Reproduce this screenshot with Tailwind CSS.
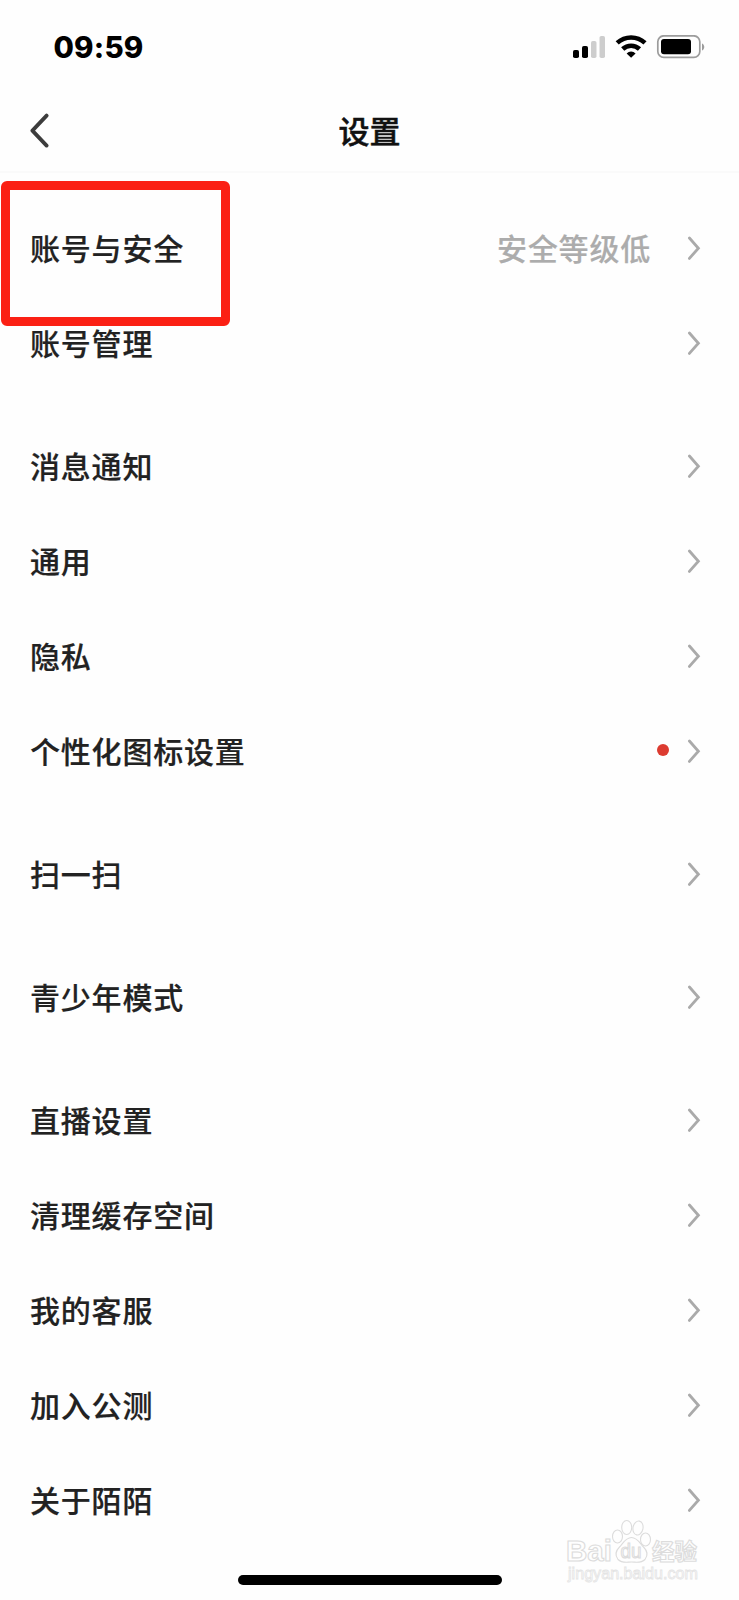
<!DOCTYPE html>
<html lang="zh-CN">
  <head>
    <meta charset="UTF-8" />
    <meta name="viewport" content="width=device-width, initial-scale=1.0" />
    <title>设置</title>
    <script src="https://cdn.jsdelivr.net/npm/@tailwindcss/browser@4"></script>
  </head>
  <body class="relative flex flex-col w-[739px] h-[1600px] overflow-hidden bg-[#fefefe] text-[#222222] font-['Noto_Sans_CJK_SC',sans-serif]">
    <!-- Status bar -->
    <div class="flex items-center justify-between h-[94px] pl-[53.5px] pr-[34px] text-black">
      <span class="pt-0.5 font-['Inter',sans-serif] font-extrabold text-[29.5px] leading-none tracking-[0.2px]">09:59</span>
      <svg class="w-[133px] h-6" viewBox="572 35 133 24" fill="none">
        <rect x="573" y="50" width="6" height="8" rx="1.8" fill="#000" />
        <rect x="582" y="46" width="6" height="12" rx="1.8" fill="#000" />
        <rect x="591" y="41" width="5.5" height="17" rx="1.8" fill="#cdcdcd" />
        <rect x="599.5" y="36" width="5.5" height="22" rx="1.8" fill="#cdcdcd" />
        <g stroke="#000" stroke-width="4.6">
          <path d="M617.2 42.9a20.5 20.5 0 0 1 27.8 0" />
          <path d="M622.7 49a12.3 12.3 0 0 1 16.8 0" />
        </g>
        <path d="M631.1 57.8l-4.5-4.4a6.4 6.4 0 0 1 9 0z" fill="#000" />
        <rect x="657.8" y="35.8" width="42" height="21.6" rx="6" stroke="#9c9c9c" stroke-width="1.7" />
        <rect x="661" y="39" width="30" height="15.3" rx="3" fill="#000" />
        <path d="M702 43.4c3 1.2 3 5.8 0 7z" fill="#9c9c9c" />
      </svg>
    </div>

    <!-- Header -->
    <header class="relative flex items-center justify-center h-[79px] pb-[7px] border-b-2 border-[#fafafa]">
      <svg class="absolute left-[28px] top-[18px] w-6 h-9" viewBox="0 0 24 36" fill="none" stroke="#3c3c3c" stroke-width="3.8" stroke-linecap="round" stroke-linejoin="round">
        <path d="M18.6 3.6L4.4 18.6l14.2 15" />
      </svg>
      <h1 class="text-[31px] leading-none font-medium text-[#111111] [-webkit-text-stroke:0.5px_#111111]">设置</h1>
    </header>

    <!-- Settings list -->
    <main class="flex flex-col gap-[28.4px] pt-[28px] pl-[30px] pr-[38px] text-[30px] leading-none font-medium tracking-[0.8px] [-webkit-text-stroke:0.2px]">
      <section>
        <div class="flex items-center justify-between h-[94.8px]">
          <span class="pb-0.5">账号与安全</span>
          <div class="flex items-center gap-9">
            <span class="pb-0.5 text-[#acacac]">安全等级低</span>
            <svg class="w-[14px] h-6" viewBox="0 0 14 24" fill="none" stroke="#aaaaaa" stroke-width="2.8" stroke-linecap="round"><path d="M2.4 2L11.4 12.2 2.4 22.4" /></svg>
          </div>
        </div>
        <div class="flex items-center justify-between h-[94.8px]">
          <span class="pb-0.5">账号管理</span>
          <svg class="w-[14px] h-6" viewBox="0 0 14 24" fill="none" stroke="#aaaaaa" stroke-width="2.8" stroke-linecap="round"><path d="M2.4 2L11.4 12.2 2.4 22.4" /></svg>
        </div>
      </section>

      <section>
        <div class="flex items-center justify-between h-[94.8px]">
          <span class="pb-0.5">消息通知</span>
          <svg class="w-[14px] h-6" viewBox="0 0 14 24" fill="none" stroke="#aaaaaa" stroke-width="2.8" stroke-linecap="round"><path d="M2.4 2L11.4 12.2 2.4 22.4" /></svg>
        </div>
        <div class="flex items-center justify-between h-[94.8px]">
          <span class="pb-0.5">通用</span>
          <svg class="w-[14px] h-6" viewBox="0 0 14 24" fill="none" stroke="#aaaaaa" stroke-width="2.8" stroke-linecap="round"><path d="M2.4 2L11.4 12.2 2.4 22.4" /></svg>
        </div>
        <div class="flex items-center justify-between h-[94.8px]">
          <span class="pb-0.5">隐私</span>
          <svg class="w-[14px] h-6" viewBox="0 0 14 24" fill="none" stroke="#aaaaaa" stroke-width="2.8" stroke-linecap="round"><path d="M2.4 2L11.4 12.2 2.4 22.4" /></svg>
        </div>
        <div class="flex items-center justify-between h-[94.8px]">
          <span class="pb-0.5">个性化图标设置</span>
          <div class="flex items-center gap-[18px]">
            <span class="w-3 h-3 mb-0.5 rounded-full bg-[#dc3b30]"></span>
            <svg class="w-[14px] h-6" viewBox="0 0 14 24" fill="none" stroke="#aaaaaa" stroke-width="2.8" stroke-linecap="round"><path d="M2.4 2L11.4 12.2 2.4 22.4" /></svg>
          </div>
        </div>
      </section>

      <section>
        <div class="flex items-center justify-between h-[94.8px]">
          <span class="pb-0.5">扫一扫</span>
          <svg class="w-[14px] h-6" viewBox="0 0 14 24" fill="none" stroke="#aaaaaa" stroke-width="2.8" stroke-linecap="round"><path d="M2.4 2L11.4 12.2 2.4 22.4" /></svg>
        </div>
      </section>

      <section>
        <div class="flex items-center justify-between h-[94.8px]">
          <span class="pb-0.5">青少年模式</span>
          <svg class="w-[14px] h-6" viewBox="0 0 14 24" fill="none" stroke="#aaaaaa" stroke-width="2.8" stroke-linecap="round"><path d="M2.4 2L11.4 12.2 2.4 22.4" /></svg>
        </div>
      </section>

      <section>
        <div class="flex items-center justify-between h-[94.8px]">
          <span class="pb-0.5">直播设置</span>
          <svg class="w-[14px] h-6" viewBox="0 0 14 24" fill="none" stroke="#aaaaaa" stroke-width="2.8" stroke-linecap="round"><path d="M2.4 2L11.4 12.2 2.4 22.4" /></svg>
        </div>
        <div class="flex items-center justify-between h-[94.8px]">
          <span class="pb-0.5">清理缓存空间</span>
          <svg class="w-[14px] h-6" viewBox="0 0 14 24" fill="none" stroke="#aaaaaa" stroke-width="2.8" stroke-linecap="round"><path d="M2.4 2L11.4 12.2 2.4 22.4" /></svg>
        </div>
        <div class="flex items-center justify-between h-[94.8px]">
          <span class="pb-0.5">我的客服</span>
          <svg class="w-[14px] h-6" viewBox="0 0 14 24" fill="none" stroke="#aaaaaa" stroke-width="2.8" stroke-linecap="round"><path d="M2.4 2L11.4 12.2 2.4 22.4" /></svg>
        </div>
        <div class="flex items-center justify-between h-[94.8px]">
          <span class="pb-0.5">加入公测</span>
          <svg class="w-[14px] h-6" viewBox="0 0 14 24" fill="none" stroke="#aaaaaa" stroke-width="2.8" stroke-linecap="round"><path d="M2.4 2L11.4 12.2 2.4 22.4" /></svg>
        </div>
        <div class="flex items-center justify-between h-[94.8px]">
          <span class="pb-0.5">关于陌陌</span>
          <svg class="w-[14px] h-6" viewBox="0 0 14 24" fill="none" stroke="#aaaaaa" stroke-width="2.8" stroke-linecap="round"><path d="M2.4 2L11.4 12.2 2.4 22.4" /></svg>
        </div>
      </section>
    </main>

    <!-- Highlight box -->
    <div class="absolute left-[1px] top-[181px] w-[229px] h-[145px] border-[9px] border-[#fb2014] rounded-[6px]"></div>

    <!-- Watermark -->
    <svg class="absolute left-[560px] top-[1515px] w-[145px] h-[72px]" viewBox="560 1515 145 72" fill="#fefefe" stroke="#dcdcdc" stroke-width="1.1">
      <text x="566" y="1561" font-family="Liberation Sans" font-weight="bold" font-size="29" textLength="46" lengthAdjust="spacingAndGlyphs">Bai</text>
      <ellipse cx="617.5" cy="1536.5" rx="5" ry="6.5" />
      <ellipse cx="626.7" cy="1527.5" rx="5" ry="7" />
      <ellipse cx="638" cy="1528" rx="5" ry="7" transform="rotate(12 638 1528)" />
      <ellipse cx="645.5" cy="1539.5" rx="5" ry="6.5" />
      <path d="M631.5 1537.5c6 0 8.5 6 12 9.5s5 8 1.5 12.5c-4 4-9 2.5-13.5 2.5s-9.5 1.5-13.5-2.5c-3.5-4.500-2-9 1.500-12.500s6-9.500 12-9.500z" />
      <text x="620.5" y="1558" font-family="Liberation Sans" font-size="20" textLength="21" lengthAdjust="spacingAndGlyphs">du</text>
      <text x="652" y="1560" font-family="Noto Sans CJK SC" font-weight="bold" font-size="22.5">经验</text>
      <text x="568" y="1579" font-family="Liberation Sans" font-size="16" stroke="#e4e4e4" stroke-width="0.8" textLength="130" lengthAdjust="spacingAndGlyphs">jingyan.baidu.com</text>
    </svg>

    <!-- Home indicator -->
    <div class="absolute left-[238px] top-[1575px] w-[264px] h-[10px] rounded-full bg-black"></div>
  </body>
</html>
